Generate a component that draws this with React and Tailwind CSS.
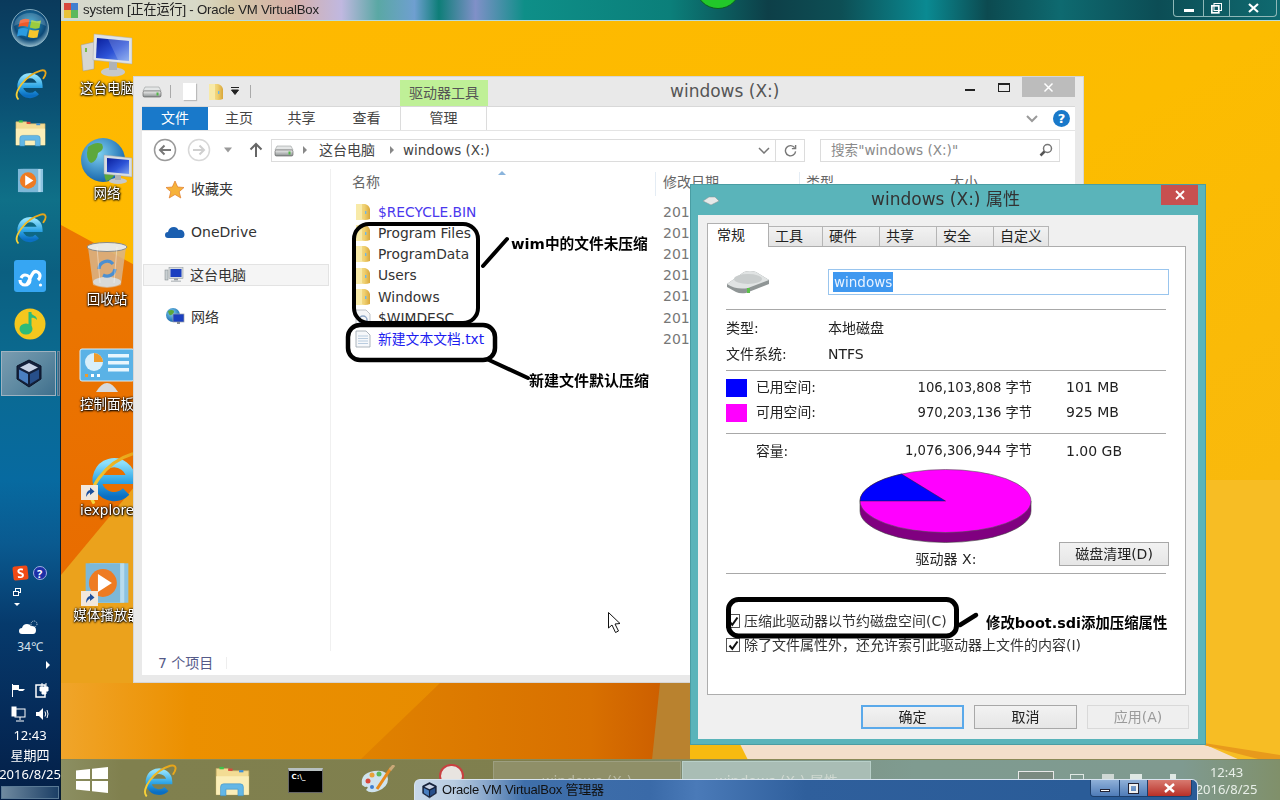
import React from "react";

const Gradients = () => (
  <svg width="0" height="0" className="absolute">
    <defs>
      <linearGradient id="ieBlue" x1="0" y1="0" x2="0" y2="1">
        <stop offset="0" stopColor="#8fe0fb" />
        <stop offset="0.55" stopColor="#2fa6e6" />
        <stop offset="1" stopColor="#0b6fc2" />
      </linearGradient>
      <linearGradient id="gold" x1="0" y1="1" x2="1" y2="0">
        <stop offset="0" stopColor="#f7d33a" />
        <stop offset="1" stopColor="#e6a217" />
      </linearGradient>
      <linearGradient id="screen" x1="0" y1="0" x2="1" y2="1">
        <stop offset="0" stopColor="#0a1f9c" />
        <stop offset="0.55" stopColor="#2c52d6" />
        <stop offset="1" stopColor="#7aa0ee" />
      </linearGradient>
      <linearGradient id="folderY" x1="0" y1="0" x2="1" y2="0">
        <stop offset="0" stopColor="#f8e9a8" />
        <stop offset="0.6" stopColor="#efd070" />
        <stop offset="1" stopColor="#d9a73a" />
      </linearGradient>
      <linearGradient id="diskG" x1="0" y1="0" x2="0" y2="1">
        <stop offset="0" stopColor="#f0f0f0" />
        <stop offset="1" stopColor="#8a8f8f" />
      </linearGradient>
      <radialGradient id="orb" cx="0.5" cy="0.4" r="0.6">
        <stop offset="0" stopColor="#2aa0cf" />
        <stop offset="0.7" stopColor="#0d4a78" />
        <stop offset="1" stopColor="#8fb7c8" />
      </radialGradient>
      <radialGradient id="globe" cx="0.4" cy="0.35" r="0.7">
        <stop offset="0" stopColor="#7fd0f0" />
        <stop offset="1" stopColor="#1160a8" />
      </radialGradient>
      <linearGradient id="wallBase" x1="0" y1="0" x2="1" y2="1">
        <stop offset="0" stopColor="#ffb800" />
        <stop offset="0.5" stopColor="#fcbc00" />
        <stop offset="1" stopColor="#f7b714" />
      </linearGradient>
      <linearGradient id="wallDark" x1="0" y1="0" x2="0" y2="1">
        <stop offset="0" stopColor="#ec7800" />
        <stop offset="1" stopColor="#e66600" />
      </linearGradient>
      <linearGradient id="wallBottom" x1="0" y1="0" x2="1" y2="0">
        <stop offset="0" stopColor="#f0a52a" />
        <stop offset="0.2" stopColor="#ec9000" />
        <stop offset="0.6" stopColor="#e78c00" />
        <stop offset="1" stopColor="#e58500" />
      </linearGradient>
      <linearGradient id="wallBurn" x1="0" y1="0" x2="1" y2="0">
        <stop offset="0" stopColor="#e08200" />
        <stop offset="0.7" stopColor="#d87000" />
        <stop offset="1" stopColor="#c85800" />
      </linearGradient>
    </defs>
  </svg>
);

const IE = ({ s = 40 }) => (
  <svg width={s} height={s} viewBox="0 0 48 48" fill="none">
    <path d="M10 26 H38 A14 14 0 1 0 34 36" stroke="url(#ieBlue)" strokeWidth="7.5" />
    <path d="M7 45 C0 37 16 12 39 5 C47 3 48 9 43 16" stroke="url(#gold)" strokeWidth="2.6" strokeLinecap="round" />
  </svg>
);

const FolderExplorer = ({ s = 34 }) => (
  <svg width={s} height={s} viewBox="0 0 34 34">
    <path d="M2 6 h11 l2 2 h17 v22 h-30 z" fill="#f3dc94" stroke="#c9ad66" strokeWidth="0.6" />
    <rect x="5" y="4.5" width="4" height="2.2" fill="#3fc24b" />
    <rect x="13" y="6" width="4" height="2.2" fill="#d9483b" />
    <rect x="23" y="7.5" width="4" height="2" fill="#3b8fd9" />
    <path d="M2 13 h30 v17 h-30 z" fill="#fbeeb8" />
    <path d="M6 31 v-8 q0-3 3-3 h15 q3 0 3 3 v8 h-5 v-6 h-11 v6 z" fill="#63b7e6" stroke="#3a8cc0" strokeWidth="0.5" />
  </svg>
);

const Media = ({ s = 28 }) => (
  <svg width={s} height={s} viewBox="0 0 28 28">
    <rect x="6" y="2" width="21" height="24" fill="#8cc3e0" />
    <rect x="3.5" y="2" width="21" height="24" fill="#b8dcee" />
    <rect x="1" y="2" width="21" height="24" fill="#7db8d8" />
    <circle cx="11.5" cy="14" r="8.5" fill="#ee7b22" />
    <path d="M8.5 8.5 L17 14 L8.5 19.5z" fill="#fff" />
  </svg>
);

const Baidu = () => (
  <svg width="32" height="32" viewBox="0 0 32 32">
    <rect width="32" height="32" rx="3" fill="#36a6f3" />
    <path d="M6 20a5 5 0 1 0 5-5c-2 0-3 1-4 3M11 25c3 0 5-8 8-12 2-3 7-1 7 3 0 2-1 3-2 4" fill="none" stroke="#fff" strokeWidth="3.2" />
    <circle cx="26.5" cy="25" r="1.6" fill="#fff" />
  </svg>
);

const QQ = () => (
  <svg width="32" height="32" viewBox="0 0 32 32">
    <circle cx="16" cy="16" r="15.5" fill="#f4c71e" />
    <path d="M16 4 V20" stroke="#2dbb78" strokeWidth="3" />
    <ellipse cx="12" cy="21" rx="6.5" ry="5.5" fill="#2dbb78" />
    <path d="M16 4 C18 8 23 7 23 12 C20 9 18 10 16 10z" fill="#2dbb78" />
  </svg>
);

const VBox = ({ s = 28 }) => (
  <svg width={s} height={s} viewBox="0 0 28 30">
    <path d="M14 1 L26 7 V20 L14 28 L2 20 V7z" fill="#14213c" stroke="#0b1428" />
    <path d="M14 4 L23 8.5 L14 13 L5 8.5z" fill="#c8d3e6" />
    <path d="M4 10.5 L13 15 V25 L4 19.5z" fill="#4a7fc0" />
    <path d="M24 10.5 L15 15 V25 L24 19.5z" fill="#274f8a" />
  </svg>
);

const StartOrb = () => (
  <svg width="38" height="38" viewBox="0 0 38 38">
    <circle cx="19" cy="19" r="18.5" fill="url(#orb)" stroke="#9cc0cf" strokeWidth="0.8" />
    <path d="M9 11.500 q4.500-3 9.500-1 l-1.600 7.500 q-5-2-9.500 0z" fill="#ef5a2a" />
    <path d="M20.500 11 q4.500 2 9.500 0.500 l-1.600 7.500 q-5 1.500-9.500-0.500z" fill="#9ccc3e" />
    <path d="M7.500 20 q4.500-2 9.500 0 l-1.600 7.500 q-5-2-9.500 0z" fill="#2b9be0" />
    <path d="M18.500 20.500 q4.500 1.500 9.500 0.500 l-1.600 7.500 q-5 1-9.500-0.500z" fill="#f7c52b" />
    <path d="M3 17 A16 13 0 0 1 35 17 Q19 9 3 17z" fill="#fff" opacity="0.18" />
  </svg>
);

const Computer = () => (
  <svg width="54" height="48" viewBox="0 0 54 48">
    <path d="M1 14 L14 11 V38 L3 40z" fill="#d6d6d2" stroke="#9a9a96" strokeWidth="0.5" />
    <rect x="5" y="17" width="2" height="4" fill="#79b94b" />
    <path d="M14 3 L52 7 V33 L13 29z" fill="#dfe3e6" stroke="#a8adb2" strokeWidth="0.5" />
    <path d="M17 7 L49 10 V30 L16 27z" fill="url(#screen)" />
    <path d="M28 8 L49 10 V30 L38 29z" fill="#fff" opacity="0.18" />
    <ellipse cx="33" cy="41" rx="12" ry="4.5" fill="#c6c9cb" />
    <rect x="29" y="31" width="8" height="8" fill="#aeb2b5" />
  </svg>
);

const NetworkIcon = () => (
  <svg width="54" height="48" viewBox="0 0 54 48">
    <circle cx="23" cy="23" r="22" fill="url(#globe)" />
    <path d="M8 10 q8-6 14-3 q3 6-4 9 q-1 8-7 10 q-6-4-3-16z M28 26 q8 0 8 8 q-2 8-10 10 q-4-8 2-18z" fill="#5da83c" />
    <path d="M24 18 L52 21 V40 L24 37z" fill="#d8dde0" stroke="#9aa0a5" strokeWidth="0.5" />
    <path d="M27 21 L49 23 V37 L27 35z" fill="url(#screen)" />
    <ellipse cx="38" cy="44" rx="9" ry="3" fill="#c6c9cb" />
    <rect x="35" y="38" width="6" height="5" fill="#aeb2b5" />
  </svg>
);

const Recycle = () => (
  <svg width="44" height="50" viewBox="0 0 44 50">
    <path d="M3 6 L8 44 Q22 50 36 44 L41 6z" fill="#d9b48a" opacity="0.85" />
    <ellipse cx="22" cy="6" rx="20" ry="4.5" fill="#e8e8e4" stroke="#8a8a86" />
    <ellipse cx="22" cy="41" rx="14" ry="5" fill="#d9d9d6" />
    <path d="M14 28 a8 8 0 0 1 14-5 M30 28 a8 8 0 0 1-12 6" fill="none" stroke="#4c8fd0" strokeWidth="3.2" />
    <path d="M12 6 L15 42 M32 6 L29 42" stroke="#fff" strokeWidth="0.8" opacity="0.5" />
  </svg>
);

const ControlPanel = () => (
  <svg width="56" height="48" viewBox="0 0 56 48">
    <rect x="1" y="1" width="54" height="32" rx="2" fill="#5ab2e6" stroke="#d8edf8" />
    <circle cx="15" cy="14" r="9" fill="#d8effa" />
    <path d="M15 14 V5 A9 9 0 0 1 24 14z" fill="#ef9b2b" />
    <rect x="29" y="6" width="21" height="3.5" fill="#e8f6fd" />
    <rect x="29" y="13" width="21" height="3.5" fill="#e8f6fd" />
    <rect x="29" y="20" width="21" height="3.5" fill="#e8f6fd" />
    <rect x="6" y="26" width="3" height="3" fill="#ef9b2b" />
    <rect x="12" y="26" width="3" height="3" fill="#fff" />
    <rect x="18" y="26" width="3" height="3" fill="#fff" />
    <path d="M17 44 Q28 26 39 44z" fill="#d8dadb" />
  </svg>
);

const ShortcutBadge = () => (
  <span className="absolute left-[20px] bottom-[1px] flex h-[15px] w-[17px] items-center justify-center bg-[#f2e8dc]">
    <svg width="11" height="11" viewBox="0 0 11 11">
      <path d="M2 10 Q2 4 6 3 V0.5 L10.5 4.5 L6 8 V5.5 Q4 6 2 10z" fill="#1d4f9c" />
    </svg>
  </span>
);

const DesktopIcon = ({ label, children }) => (
  <div className="flex h-[105.5px] w-[92px] shrink-0 flex-col items-center pt-[2px]">
    <div className="relative flex h-[48px] w-full items-center justify-center">{children}</div>
    <div className="flex h-[18px] items-center whitespace-nowrap text-[13.5px] text-white [text-shadow:0_1px_2px_#000,0_0_2px_#000,1px_0_2px_#000]">{label}</div>
  </div>
);

const DriveSmall = ({ s = 20 }) => (
  <svg width={s} height={s * 0.65} viewBox="0 0 20 13">
    <path d="M3 2 H17 L19 6 H1z" fill="#e4e6e6" stroke="#8a8f8f" strokeWidth="0.5" />
    <rect x="1" y="6" width="18" height="6" rx="1.5" fill="url(#diskG)" stroke="#555" strokeWidth="0.6" />
    <rect x="14.5" y="7.5" width="2" height="3" fill="#52b848" />
  </svg>
);

const DriveBig = () => (
  <svg width="44" height="24" viewBox="0 0 44 24">
    <path d="M1 14 L18 2 Q24 0 30 2 L43 10 V14 L20 23 Q14 24 10 22 L1 17z" fill="#8f9595" />
    <path d="M1 14 L18 2 Q24 0 30 2 L43 10 L22 18 Q10 20 1 14z" fill="#e0e3e3" />
    <ellipse cx="22" cy="9" rx="14" ry="5" fill="#c9cdcd" />
    <rect x="21" y="18" width="3" height="5" fill="#5cc04a" />
  </svg>
);

const Folder = () => (
  <svg width="16" height="18" viewBox="0 0 16 18">
    <path d="M1 1 H10 Q14 2 15 6 V16 Q10 18 5 16 L1 17z" fill="url(#folderY)" />
    <path d="M1 1 H7 V17 H1z" fill="#f8eaa8" />
    <rect x="10" y="8" width="1.4" height="3" fill="#6fb7e6" />
  </svg>
);

const TextFile = () => (
  <svg width="16" height="18" viewBox="0 0 16 18">
    <path d="M1 1 H11 L15 5 V17 H1z" fill="#f6f8fb" stroke="#9aa3ad" strokeWidth="0.8" />
    <path d="M3 6H13M3 8.5H13M3 11H13M3 13.500H13" stroke="#aac0d8" strokeWidth="0.8" />
  </svg>
);

const WimFile = () => (
  <svg width="16" height="18" viewBox="0 0 16 18">
    <path d="M1 1 H11 L15 5 V17 H1z" fill="#f4f5f7" stroke="#b0b5bb" strokeWidth="0.8" />
    <circle cx="8" cy="11" r="4" fill="none" stroke="#8fa8c8" strokeWidth="1.5" />
  </svg>
);

const Star = () => (
  <svg width="20" height="19" viewBox="0 0 20 19">
    <path d="M10 1 L12.700 7 L19 7.500 L14.200 11.700 L15.800 18 L10 14.500 L4.200 18 L5.800 11.700 L1 7.500 L7.300 7z" fill="#f6b23a" stroke="#e07a2a" strokeWidth="0.7" />
  </svg>
);

const Cloud = () => (
  <svg width="20" height="12" viewBox="0 0 20 12">
    <path d="M3 12 a3 3 0 0 1 0-6 q1-5 6-5 q3 0 4.500 3 q5-1 6 4 q0 4-3 4z" fill="#1b5fb0" />
  </svg>
);

const SmallPC = () => (
  <svg width="20" height="16" viewBox="0 0 20 16">
    <rect x="1" y="3" width="3" height="10" fill="#c9cfd2" stroke="#7b8488" strokeWidth="0.5" />
    <rect x="5" y="0.5" width="14" height="11" fill="#d8dde0" stroke="#8a9296" strokeWidth="0.5" />
    <rect x="6.500" y="2" width="11" height="8" fill="#1b3fc0" />
    <rect x="10" y="11.500" width="4" height="2" fill="#9aa0a5" />
    <rect x="7" y="13.500" width="10" height="1.500" fill="#c0c4c7" />
  </svg>
);

const SmallNet = () => (
  <svg width="20" height="18" viewBox="0 0 20 18">
    <circle cx="8" cy="7" r="7" fill="url(#globe)" />
    <path d="M3 3 q4-2 6 0 q0 3-3 4 q-2 1-3-4z" fill="#5da83c" />
    <rect x="8" y="6" width="11" height="8" fill="#1b3fc0" stroke="#9aa0a5" strokeWidth="0.7" />
    <rect x="12" y="14" width="3" height="2" fill="#8a8f92" />
  </svg>
);

const NavItem = ({ icon, label, active, className = "" }) => (
  <div className={`flex h-[22px] items-center ${active ? "mx-[1px] border border-[#e3e3e3] bg-[#f5f5f5]" : "mx-[2px] border border-transparent"} ${className}`}>
    <span className="flex w-[46px] shrink-0 items-center justify-end pr-[6px]">{icon}</span>
    <span className="whitespace-nowrap text-[14px] text-[#333]">{label}</span>
  </div>
);

const FileRow = ({ icon, name, date, colorClass = "text-[#333]" }) => (
  <div className="flex h-[21.2px] items-center">
    <span className="flex w-[22px] shrink-0 justify-center">{icon}</span>
    <span className={`w-[289px] shrink-0 whitespace-nowrap pl-[4px] text-[13.8px] ${colorClass}`}>{name}</span>
    <span className="w-[27px] overflow-hidden whitespace-nowrap text-[14px] text-[#777]">{date}</span>
  </div>
);

const Divider = ({ className = "" }) => <div className={`h-px w-[440px] shrink-0 bg-[#a8a8a8] ${className}`} />;

const SizeRow = ({ label, bytes, human, swatch, className = "" }) => (
  <div className={`flex items-center text-[#222] ${className}`}>
    <span className={`mr-[9px] h-[18px] w-[21px] shrink-0 ${swatch || ""}`} />
    <span className="w-[100px] whitespace-nowrap text-[13.8px]">{label}</span>
    <span className="w-[176px] whitespace-nowrap text-right text-[13.2px]">{bytes}</span>
    <span className="ml-[34px] whitespace-nowrap text-[14px]">{human}</span>
  </div>
);

const Check = () => (
  <span className="flex h-[14px] w-[14px] shrink-0 items-center justify-center border border-[#555] bg-white">
    <svg width="11" height="11" viewBox="0 0 11 11"><path d="M1.500 5.500 L4.300 8.800 L9.500 1.500" fill="none" stroke="#111" strokeWidth="2" /></svg>
  </span>
);

const DlgTab = ({ label, w, active }) =>
  active ? (
    <div className={`${w} relative z-10 -mb-px flex h-[24px] items-start border border-b-0 border-[#b0b0b0] bg-white pl-[9px] pt-[1px] text-[14px] text-[#222]`}>{label}</div>
  ) : (
    <div className={`${w} -ml-px mt-[3px] flex h-[20px] items-center border border-b-0 border-[#b5b5b5] bg-[linear-gradient(#f2f2f2,#e4e4e4)] pl-[6px] text-[14px] text-[#222]`}>{label}</div>
  );

const DlgButton = ({ label, w = "w-[103px]", variant }) => (
  <div
    className={`flex h-[24px] ${w} items-center justify-center text-[14px] ${
      variant === "primary"
        ? "border-2 border-[#5aa9ea] bg-[linear-gradient(#f2f2f2,#e6e6e6)] text-[#222]"
        : variant === "disabled"
        ? "border border-[#d9d9d9] bg-[#efefef] text-[#9a9a9a]"
        : "border border-[#a8a8a8] bg-[linear-gradient(#f2f2f2,#e6e6e6)] text-[#222]"
    }`}
  >
    {label}
  </div>
);

const Tab = ({ label, w }) => <div className={`flex h-full ${w} items-center justify-center text-[14px] text-[#444]`}>{label}</div>;

const Explorer = () => (
  <div className="absolute left-[133px] top-[76px] flex h-[607px] w-[951px] flex-col border border-[#d6d6d6] bg-[#e9e9e9]">
    <div className="relative flex h-[29px] shrink-0 items-center pl-[8px]">
      <DriveSmall />
      <span className="ml-[8px] h-[13px] w-px bg-[#aaa]" />
      <span className="ml-[12px] h-[17px] w-[13px] bg-white shadow-[1px_1px_1px_#bbb]" />
      <span className="ml-[12px]"><Folder /></span>
      <svg className="ml-[6px]" width="10" height="9" viewBox="0 0 10 9"><path d="M1 0.500H9M1.500 3 L5 7.500 L8.500 3z" stroke="#222" fill="#222" /></svg>
      <span className="ml-[10px] h-[13px] w-px bg-[#aaa]" />
      <div className="absolute left-[266px] top-[3px] flex h-[26px] w-[88px] items-center justify-center whitespace-nowrap bg-[#bff097] text-[14px] text-[#555]">驱动器工具</div>
      <div className="absolute left-[536px] top-0 whitespace-nowrap text-[17px] leading-[29px] text-[#555]">windows (X:)</div>
      <div className="ml-auto flex h-full items-start">
        <span className="mr-[23px] mt-[12px] h-[2px] w-[10px] bg-[#222]" />
        <span className="mr-[12px] mt-[6px] h-[9px] w-[12px] border border-t-[2px] border-[#222]" />
        <div className="mr-[8px] flex h-[20px] w-[53px] items-center justify-center bg-[#bcbcbc]">
          <svg width="11" height="11" viewBox="0 0 11 11"><path d="M1.500 1.500 L9.500 9.500 M9.500 1.500 L1.500 9.500" stroke="#fff" strokeWidth="1.500" /></svg>
        </div>
      </div>
    </div>
    <div className="mx-[8px] mb-[7px] flex min-h-0 flex-1 flex-col border-t border-[#d8d8d8] bg-white">
      <div className="flex h-[24px] shrink-0 items-center border-b border-[#e4e4e4]">
        <div className="flex h-full w-[66px] items-center justify-center bg-[#1979ca] text-[14px] text-white">文件</div>
        <Tab label="主页" w="w-[62px]" />
        <Tab label="共享" w="w-[63px]" />
        <Tab label="查看" w="w-[67px]" />
        <div className="flex h-full w-[87px] items-center justify-center border-x border-[#dcdcdc] text-[14px] text-[#444]">管理</div>
        <svg className="ml-auto mr-[14px]" width="14" height="8" viewBox="0 0 14 8"><path d="M2 1 L7 6 L12 1" stroke="#9a9a9a" strokeWidth="2" fill="none" /></svg>
        <span className="mr-[5px] flex h-[17px] w-[17px] items-center justify-center rounded-full bg-[#1979ca] text-[13px] font-bold text-white">?</span>
      </div>
      <div className="flex h-[38px] shrink-0 items-center pl-[11px]">
        <svg width="24" height="24" viewBox="0 0 24 24" fill="none"><circle cx="12" cy="12" r="10.500" stroke="#9a9a9a" strokeWidth="1.500" /><path d="M18 12H7M11.500 7.500 L7 12 L11.500 16.500" stroke="#777" strokeWidth="2" /></svg>
        <svg className="ml-[10px]" width="24" height="24" viewBox="0 0 24 24" fill="none"><circle cx="12" cy="12" r="10.500" stroke="#d8d8d8" strokeWidth="1.500" /><path d="M6 12H17M12.500 7.500 L17 12 L12.500 16.500" stroke="#cfcfcf" strokeWidth="2" /></svg>
        <svg className="ml-[12px]" width="10" height="6" viewBox="0 0 10 6"><path d="M1 0.500H9L5 5.500z" fill="#9a9a9a" /></svg>
        <svg className="ml-[16px]" width="14" height="16" viewBox="0 0 14 16" fill="none"><path d="M7 15V2M1.500 7.500 L7 2 L12.500 7.500" stroke="#666" strokeWidth="2" /></svg>
        <div className="ml-[8px] flex h-[23px] w-[505px] items-center border border-[#dcdcdc] pl-[2px]">
          <DriveSmall />
          <span className="ml-[9px] h-0 w-0 border-y-[4px] border-l-[4px] border-y-transparent border-l-[#888]" />
          <span className="ml-[12px] whitespace-nowrap text-[14px] text-[#444]">这台电脑</span>
          <span className="ml-[15px] h-0 w-0 border-y-[4px] border-l-[4px] border-y-transparent border-l-[#888]" />
          <span className="ml-[9px] whitespace-nowrap text-[13.5px] text-[#444]">windows (X:)</span>
          <svg className="ml-auto mr-[5px]" width="12" height="7" viewBox="0 0 12 7"><path d="M1 1 L6 6 L11 1" stroke="#777" strokeWidth="1.500" fill="none" /></svg>
        </div>
        <div className="flex h-[23px] w-[29px] items-center justify-center border border-l-0 border-[#dcdcdc]">
          <svg width="13" height="13" viewBox="0 0 14 14" fill="none"><path d="M11.500 4 A5.500 5.500 0 1 0 12.500 8" stroke="#777" strokeWidth="1.500" /><path d="M12.500 1 V5 H8.500" stroke="#777" strokeWidth="1.500" /></svg>
        </div>
        <div className="ml-[15px] flex h-[23px] w-[240px] items-center border border-[#dcdcdc] pl-[10px]">
          <span className="whitespace-nowrap text-[13.6px] text-[#8a8a8a]">搜索"windows (X:)"</span>
          <svg className="ml-auto mr-[6px]" width="14" height="14" viewBox="0 0 14 14" fill="none"><circle cx="8.500" cy="5.500" r="4" stroke="#777" strokeWidth="1.500" /><path d="M5.500 8.500 L1.500 12.500" stroke="#555" strokeWidth="2.500" /></svg>
        </div>
      </div>
      <div className="flex min-h-0 flex-1">
        <div className="flex w-[189px] shrink-0 flex-col border-r border-[#f0f0f0] pb-[1px] pt-[9px]">
          <NavItem icon={<Star />} label="收藏夹" />
          <NavItem icon={<Cloud />} label="OneDrive" className="mt-[21px]" />
          <NavItem icon={<SmallPC />} label="这台电脑" active className="mt-[21px]" />
          <NavItem icon={<SmallNet />} label="网络" className="mt-[20px]" />
        </div>
        <div className="flex min-w-0 flex-1 flex-col pl-[21px]">
          <div className="relative flex h-[27px] shrink-0 items-center whitespace-nowrap">
            <span className="w-[311px] text-[14px] text-[#666]">名称</span>
            <span className="absolute left-[146px] top-[2px] h-0 w-0 border-x-[4px] border-b-[4px] border-x-transparent border-b-[#8ab4dc]" />
            <span className="absolute left-[303px] top-[3px] h-[24px] w-px bg-[#e4ecf4]" />
            <span className="w-[143px] text-[14px] text-[#666]">修改日期</span>
            <span className="absolute left-[447px] top-[3px] h-[24px] w-px bg-[#e4ecf4]" />
            <span className="w-[144px] text-[14px] text-[#666]">类型</span>
            <span className="text-[14px] text-[#666]">大小</span>
          </div>
          <div className="flex flex-col pt-[5.5px]">
            <FileRow icon={<Folder />} name="$RECYCLE.BIN" date="2014/3/18 19:26" colorClass="text-[#4a38ee]" />
            <FileRow icon={<Folder />} name="Program Files" date="2014/3/18 19:26" />
            <FileRow icon={<Folder />} name="ProgramData" date="2014/3/18 19:26" />
            <FileRow icon={<Folder />} name="Users" date="2014/3/18 19:26" />
            <FileRow icon={<Folder />} name="Windows" date="2014/3/18 19:26" />
            <FileRow icon={<WimFile />} name="$WIMDESC" date="2014/3/18 19:26" />
            <FileRow icon={<TextFile />} name="新建文本文档.txt" date="2016/8/25 12:40" colorClass="text-[#1c1cf0]" />
          </div>
        </div>
      </div>
      <div className="flex h-[24px] shrink-0 items-center pl-[16px]">
        <span className="whitespace-nowrap text-[14px] text-[#555a88]">7 个项目</span>
        <span className="ml-[13px] h-[12px] w-px bg-[#eee]" />
      </div>
    </div>
  </div>
);

const Properties = () => (
  <div className="absolute left-[690px] top-[184px] flex h-[561px] w-[516px] flex-col border border-[#4a9da3] bg-[#5ab4ba]">
    <div className="relative flex h-[30px] shrink-0 items-center justify-center">
      <svg className="absolute left-[11px] top-[11px]" width="18" height="10" viewBox="0 0 18 10">
        <path d="M1 5 L7 1 H13 L17 5 L9 9z" fill="#e6e9e9" stroke="#8a9090" strokeWidth="0.500" />
      </svg>
      <span className="pr-[5px] text-[17px] text-[#333]">windows (X:) 属性</span>
      <div className="absolute right-[7px] top-0 flex h-[20px] w-[37px] items-center justify-center bg-[#c75050]">
        <svg width="10" height="10" viewBox="0 0 10 10"><path d="M1 1 L9 9 M9 1 L1 9" stroke="#fff" strokeWidth="1.800" /></svg>
      </div>
    </div>
    <div className="mx-[7px] flex h-[524px] flex-col bg-[#f0f0f0] pl-[9px] pt-[8px]">
      <div className="flex h-[23px] shrink-0 items-start">
        <DlgTab label="常规" w="w-[62px]" active />
        <DlgTab label="工具" w="w-[55px]" />
        <DlgTab label="硬件" w="w-[58px]" />
        <DlgTab label="共享" w="w-[58px]" />
        <DlgTab label="安全" w="w-[58px]" />
        <DlgTab label="自定义" w="w-[56px]" />
      </div>
      <div className="flex h-[449px] w-[479px] shrink-0 flex-col border border-[#adadad] bg-white pl-[18px] pt-[22px]">
        <div className="flex h-[26px] shrink-0 items-center">
          <DriveBig />
          <div className="ml-[58px] flex h-[26px] w-[341px] items-center border border-[#99c5ee] pl-[4px]">
            <span className="bg-[#3f98f0] px-px text-[13.5px] leading-[20px] text-[#e8f2ff]">windows</span>
          </div>
        </div>
        <Divider className="mt-[14px]" />
        <div className="mt-[5px] flex h-[26px] items-center text-[14px] text-[#222]"><span className="w-[102px]">类型:</span>本地磁盘</div>
        <div className="flex h-[26px] items-center text-[14px] text-[#222]"><span className="w-[102px]">文件系统:</span>NTFS</div>
        <Divider className="mt-[3px]" />
        <SizeRow className="mt-[4px] h-[25px]" swatch="bg-[#0000ff]" label="已用空间:" bytes="106,103,808 字节" human="101 MB" />
        <SizeRow className="h-[25px]" swatch="bg-[#ff00ff]" label="可用空间:" bytes="970,203,136 字节" human="925 MB" />
        <Divider className="mt-[8px]" />
        <SizeRow className="mt-[7px] h-[20px]" label="容量:" bytes="1,076,306,944 字节" human="1.00 GB" />
        <div className="mt-[4px] grid h-[104px] w-[440px] shrink-0">
          <div className="col-start-1 row-start-1 flex flex-col items-center">
            <svg width="174" height="80" viewBox="0 0 174 80">
              <path d="M1 36 V46 A85.500 31.500 0 0 0 172 46 V36z" fill="#800080" stroke="#404040" strokeWidth="0.600" />
              <ellipse cx="86.500" cy="36" rx="85.500" ry="31.500" fill="#ff00ff" stroke="#555" strokeWidth="0.600" />
              <path d="M86.500 36 H1 A85.500 31.500 0 0 1 42.500 9z" fill="#0000ff" stroke="#222" strokeWidth="0.500" />
            </svg>
            <span className="mt-[4px] flex h-[20px] items-center text-[14px] text-[#222]">驱动器 X:</span>
          </div>
          <div className="col-start-1 row-start-1 -mr-[3px] mb-[3px] flex self-end justify-self-end">
            <div className="flex h-[24px] w-[110px] items-center justify-center border border-[#a8a8a8] bg-[linear-gradient(#f2f2f2,#e6e6e6)] text-[14px] text-[#222]">磁盘清理(D)</div>
          </div>
        </div>
        <Divider className="mt-[4px]" />
        <div className="mt-[35px] flex h-[24px] items-center gap-[4px] whitespace-nowrap text-[14px] text-[#333]"><Check />压缩此驱动器以节约磁盘空间(C)</div>
        <div className="flex h-[24px] items-center gap-[4px] whitespace-nowrap text-[14px] text-[#333]"><Check />除了文件属性外，还允许索引此驱动器上文件的内容(I)</div>
      </div>
      <div className="ml-[154px] mt-[10px] flex gap-[10px]">
        <DlgButton label="确定" variant="primary" />
        <DlgButton label="取消" />
        <DlgButton label="应用(A)" w="w-[102px]" variant="disabled" />
      </div>
    </div>
  </div>
);

const Annotations = () => (
  <>
    <svg className="pointer-events-none absolute left-0 top-0" width="1280" height="800" fill="none" stroke="#000" strokeLinecap="round">
      <rect x="354" y="224" width="124" height="99" rx="15" strokeWidth="4" />
      <rect x="348" y="325" width="147" height="35" rx="12" strokeWidth="4.500" />
      <path d="M483 266 L507 239" strokeWidth="4" />
      <path d="M489 360 L528 378" strokeWidth="4" />
      <rect x="728.500" y="599.500" width="228" height="36.500" rx="10" strokeWidth="5" />
      <path d="M960 625 L976 615" strokeWidth="4.500" />
      <path d="M608.500 612.500 V628 L612 625 L615.500 632.500 L618.500 631 L615 624 L620 623.500z" fill="#fff" strokeWidth="1" strokeLinecap="butt" stroke="#111" />
    </svg>
    <div className="absolute left-[511px] top-[235px] whitespace-nowrap text-[14.7px] font-bold leading-[18px] text-black">wim中的文件未压缩</div>
    <div className="absolute left-[529px] top-[372px] whitespace-nowrap text-[15px] font-bold leading-[18px] text-black">新建文件默认压缩</div>
    <div className="absolute left-[986px] top-[614px] whitespace-nowrap text-[14.4px] font-bold leading-[18px] text-black">修改boot.sdi添加压缩属性</div>
  </>
);

const Wallpaper = () => (
  <svg className="absolute left-0 top-0" width="1219" height="738" viewBox="61 21 1219 738" preserveAspectRatio="none">
    <rect x="61" y="21" width="1219" height="738" fill="url(#wallBase)" />
    <path d="M61 225 L420 420 L700 560 V760 H61z" fill="url(#wallDark)" />
    <path d="M61 575 L140 480 V700 H61z" fill="#eba21c" />
    <path d="M61 683 H700 V760 H61z" fill="url(#wallBottom)" />
    <path d="M360 760 L440 683 L690 683 V760z" fill="url(#wallBurn)" />
    <path d="M660 683 H700 V760 H652z" fill="#b9822f" />
    <path d="M690 600 H1240 V760 H690z" fill="#f7ba10" />
    <path d="M738 740 H1185 L1262 760 H748z" fill="#f3dfcb" />
    <path d="M1206 480 H1280 V760 H1240 L1206 745z" fill="#f7bd24" />
    <path d="M1185 740 L1262 760 H1280 V755z" fill="#e89a1c" />
  </svg>
);

const SideSlot = ({ children, className = "" }) => (
  <div className={`flex h-[48px] shrink-0 items-center justify-center ${className}`}>{children}</div>
);

const Sidebar = () => (
  <div className="flex h-full w-[61px] shrink-0 flex-col border-r border-[#071c30] bg-[linear-gradient(180deg,#0a3a5c_0%,#0a4f72_12%,#0f7088_25%,#0b5f80_34%,#0b6a90_45%,#076aa0_60%,#0a5a90_68%,#063a6c_78%,#052a58_90%,#031f46_100%)]">
    <div className="flex h-[56px] shrink-0 items-center justify-center"><StartOrb /></div>
    <div className="h-[4px] shrink-0" />
    <SideSlot><IE s={34} /></SideSlot>
    <SideSlot><FolderExplorer s={33} /></SideSlot>
    <SideSlot><Media s={27} /></SideSlot>
    <SideSlot><IE s={34} /></SideSlot>
    <SideSlot><Baidu /></SideSlot>
    <SideSlot><QQ /></SideSlot>
    <div className="mt-[3px] flex h-[45px] shrink-0 pl-px">
      <div className="flex w-[55px] items-center justify-center border border-[#9fb2c0] bg-[linear-gradient(135deg,#7a9cb0,#5f8aa2_50%,#3f6f8c)]"><VBox s={30} /></div>
      <div className="ml-[1px] w-[3px] border border-[#6f8ba0] bg-[#3f6480]" />
    </div>
    <div className="mt-auto flex flex-col text-white [font-family:'Noto_Sans','Noto_Sans_CJK_SC',sans-serif]">
      <div className="flex h-[20px] items-center justify-center gap-[5px] pr-[1px]">
        <span className="flex h-[14px] w-[15px] -rotate-6 items-center justify-center rounded-[2px] bg-[#f04a16] text-[13px] font-bold leading-none text-white">S</span>
        <span className="flex h-[14px] w-[14px] items-center justify-center rounded-full border border-[#a0b0e0] bg-[#1c2fa8] text-[11px] font-bold leading-none text-white">?</span>
      </div>
      <div className="flex h-[17px] items-center pl-[13px]">
        <svg width="8" height="8" viewBox="0 0 8 8" fill="none" stroke="#fff"><rect x="2.500" y="0.500" width="5" height="4" /><rect x="0.500" y="3.500" width="5" height="4" fill="#0a3a6c" /></svg>
      </div>
      <div className="flex h-[8px] items-center pl-[14px]"><span className="h-0 w-0 border-x-[3px] border-t-[3px] border-x-transparent border-t-white" /></div>
      <div className="flex h-[32px] items-center justify-center pt-[6px]">
        <svg width="22" height="16" viewBox="0 0 22 16">
          <circle cx="15" cy="5" r="3" fill="none" stroke="#fff" strokeWidth="0.800" strokeDasharray="1 1" />
          <path d="M3 15 a3 3 0 0 1 0-6 q1-4 5-4 q3 0 4 2 q5 0 5 4 q0 4-3 4z" fill="#fff" />
        </svg>
      </div>
      <div className="flex h-[14px] items-center justify-center text-[12px] leading-none text-[#d8e4ee]">34℃</div>
      <div className="flex h-[22px] items-center justify-end pr-[10px]"><span className="h-0 w-0 border-y-[4px] border-l-[4px] border-y-transparent border-l-white" /></div>
      <div className="mt-[2px] flex h-[24px] items-center justify-center gap-[9px]">
        <svg width="15" height="15" viewBox="0 0 15 15"><path d="M1.500 1 V14" stroke="#fff" /><path d="M2 2 H8 V6 H14 L12 8 H8 L7 7 H2z" fill="#fff" /></svg>
        <svg width="14" height="16" viewBox="0 0 14 16" fill="none" stroke="#fff"><rect x="1" y="3" width="9" height="12" strokeWidth="1.500" /><path d="M5 5 H13 V9 H11 V12 H7 V9 H5z M7 1 V5 M11 1 V5" fill="#fff" strokeWidth="1" /></svg>
      </div>
      <div className="flex h-[24px] items-center justify-center gap-[9px]">
        <svg width="15" height="16" viewBox="0 0 15 16" fill="none" stroke="#fff"><rect x="4" y="3" width="10" height="8" /><path d="M9 11V14M5 15H13" /><rect x="1" y="1" width="4" height="9" fill="#fff" /></svg>
        <svg width="15" height="14" viewBox="0 0 15 14" fill="none"><path d="M1 5H4L8 1V13L4 9H1z" fill="#fff" /><path d="M10 4.500Q11.500 7 10 9.500M12 3Q14 7 12 11" stroke="#fff" /></svg>
      </div>
      <div className="flex h-[20px] items-center justify-center text-[13px]">12:43</div>
      <div className="flex h-[20px] items-center justify-center text-[13px]">星期四</div>
      <div className="flex h-[18px] items-center justify-center whitespace-nowrap text-[13px]">2016/8/25</div>
      <div className="mx-px mb-px mt-[2px] h-[13px] border border-[#5a7a95] bg-[linear-gradient(90deg,#6f8aa0,#1c3f66)]" />
    </div>
  </div>
);

const TopBar = () => (
  <div className="relative flex h-[21px] shrink-0 items-center overflow-hidden border-b border-[#b8dcdc] bg-[linear-gradient(90deg,#d6d9ce_0%,#d8dac8_11%,#d4c8a8_14%,#d6b0a8_19%,#c0b8e0_23%,#5aa8a4_26%,#6f9fd0_29%,#0e7e78_31%,#8090c8_34%,#0e8f88_38%,#0b7f7a_50%,#0d3f48_58%,#0d4f55_64%,#0a8a92_71%,#0c4a50_76%,#0e6a70_82%,#0c4d55_90%,#0f6a70_100%)] pl-[2px] shadow-[0_1px_0_#1a3030]">
    <svg width="16" height="17" viewBox="0 0 16 17">
      <rect x="1" y="1" width="14" height="15" fill="#e8e4d8" />
      <rect x="1" y="1" width="7" height="7" fill="#d9483b" />
      <rect x="8" y="1" width="7" height="7" fill="#3f7fd0" />
      <rect x="1" y="8" width="7" height="8" fill="#e8c23a" />
      <rect x="8" y="8" width="7" height="8" fill="#5cb85c" />
    </svg>
    <span className="ml-[4px] whitespace-nowrap text-[13.2px] tracking-[-0.2px] text-[#222] [font-family:'Liberation_Sans','Noto_Sans_CJK_SC',sans-serif]">system [正在运行] - Oracle VM VirtualBox</span>
    <span className="absolute left-[634px] top-[-37px] h-[46px] w-[46px] rounded-full border border-[#0b5c20] bg-[#22c72a]" />
    <div className="absolute right-[3px] top-0 flex h-[17px] w-[104px] items-start rounded-b-[4px] border border-t-0 border-[#8fb8b8]">
      <div className="flex h-full w-[30px] items-center justify-center border-r border-[#8fb8b8] pt-[4px]"><span className="h-[3px] w-[10px] bg-white" /></div>
      <div className="flex h-full w-[26px] items-center justify-center border-r border-[#8fb8b8]">
        <svg width="11" height="11" viewBox="0 0 11 11" fill="none" stroke="#fff"><rect x="3" y="0.500" width="7.500" height="7" /><rect x="0.800" y="2.800" width="7" height="7" strokeWidth="1.700" /></svg>
      </div>
      <div className="flex h-full flex-1 items-center justify-center">
        <svg width="11" height="10" viewBox="0 0 11 10"><path d="M1 1 L10 9 M10 1 L1 9" stroke="#fff" strokeWidth="2.200" /></svg>
      </div>
    </div>
  </div>
);

const TaskIcon = ({ children, w }) => <div className={`flex h-full ${w} shrink-0 items-center justify-center`}>{children}</div>;

const Taskbar = () => (
  <div className="relative flex h-[41px] shrink-0 items-start overflow-hidden border-t border-[#8a8a58] bg-[linear-gradient(90deg,#8c8f62_0%,#80804e_5%,#7f7f4e_42%,#7d9080_56%,#7f9b90_70%,#7f9a90_92%,#80906a_100%)]">
    <TaskIcon w="w-[62px]">
      <svg width="32" height="26" viewBox="0 0 32 26" fill="#fff">
        <path d="M0 3.500 L14 2 V12 H0z" /><path d="M16 1.800 L32 0 V12 H16z" /><path d="M0 14 H14 V24 L0 22.500z" /><path d="M16 14 H32 V26 L16 24.200z" />
      </svg>
    </TaskIcon>
    <TaskIcon w="w-[72px]"><IE s={36} /></TaskIcon>
    <TaskIcon w="w-[74px]"><FolderExplorer s={37} /></TaskIcon>
    <TaskIcon w="w-[72px]">
      <div className="h-[25px] w-[35px] border border-[#666] border-t-[3px] border-t-[#b8c0c0] bg-black pl-[3px] pt-[2px] text-[7px] font-bold leading-[8px] text-white">C:\_</div>
    </TaskIcon>
    <TaskIcon w="w-[74px]">
      <svg width="36" height="30" viewBox="0 0 36 30">
        <path d="M2 20 Q0 8 14 6 Q28 4 28 14 Q28 22 18 26 Q10 29 6 25 Q10 21 5 22z" fill="#cfe3ee" />
        <circle cx="8" cy="16" r="2.500" fill="#d9483b" /><circle cx="12" cy="10" r="2.500" fill="#e8a23a" /><circle cx="19" cy="9" r="2.500" fill="#5cb85c" /><circle cx="12" cy="22" r="2" fill="#3f7fd0" />
        <path d="M17 24 L31 3" stroke="#e88a1c" strokeWidth="3" /><path d="M30 5 L34 0" stroke="#c9a878" strokeWidth="3" />
      </svg>
    </TaskIcon>
    <div className="flex h-full w-[72px] shrink-0 items-start justify-center pt-[4px]">
      <span className="block h-[24px] w-[25px] rounded-full border-2 border-[#c94040] bg-[#e8e4e0]" />
    </div>
    <div className="ml-[6px] mt-[1px] flex h-[39px] w-[188px] shrink-0 items-start justify-center border border-[#9d9f80] bg-[#8f8f68] pt-[9px] text-[14px] text-[#b8b8a0]">windows (X:)</div>
    <div className="ml-px mt-[1px] flex h-[39px] w-[189px] shrink-0 items-start justify-center border border-[#b8cfc8] bg-[#a9bdb5] pt-[9px] text-[14px] text-[#cfd8d0]">windows (X:) 属性</div>
    <div className="ml-[147px] mt-[11px] h-[8px] w-[36px] border border-[#e8e8e8] border-b-0 bg-[#7a8a80]" />
    <div className="ml-[16px] mt-[14px] h-[6px] w-[14px] border border-[#dfe8e4] border-b-0" />
    <div className="ml-[18px] mt-[14px] h-[6px] w-[12px] bg-[#cfd8d4]" />
    <div className="ml-[16px] mt-[14px] h-[6px] w-[12px] bg-[#dfe8e4]" />
    <div className="ml-[28px] mt-[14px] h-[6px] w-[6px] bg-[#dfe8e4]" />
    <div className="ml-auto mr-[12px] flex h-full w-[83px] shrink-0 flex-col items-center text-[13px] leading-[18px] text-[#e8efe8] [font-family:'Noto_Sans',sans-serif]">
      <span className="mt-[3px]">12:43</span>
      <span className="mt-[-1px] whitespace-nowrap">2016/8/25</span>
    </div>
  </div>
);

const VBoxBar = () => (
  <div className="absolute bottom-0 left-[414px] flex h-[21px] w-[784px] items-center rounded-t-[6px] border border-b-0 border-[#d8e4f0] bg-[linear-gradient(90deg,#c8d8ea_0%,#b8cce0_5%,#8aa8cc_9%,#3f6faa_14%,#3a6aa8_30%,#4a7ab8_36%,#2f5f9c_50%,#2a5c98_85%,#2a5c98_100%)] pl-[6px]">
    <VBox s={17} />
    <span className="ml-[4px] whitespace-nowrap text-[13px] tracking-[-0.2px] text-[#111] [font-family:'Liberation_Sans','Noto_Sans_CJK_SC',sans-serif]">Oracle VM VirtualBox 管理器</span>
    <div className="ml-auto mr-[5px] flex h-[17px] w-[102px] self-start overflow-hidden rounded-b-[4px] border border-t-0 border-[#1d3f6c]">
      <div className="flex w-[28px] items-center justify-center bg-[linear-gradient(#8fb0d8,#4f7cb8)] pt-[4px]"><span className="h-[3px] w-[10px] border border-[#223] bg-white" /></div>
      <div className="flex w-[28px] items-center justify-center border-l border-[#1d3f6c] bg-[linear-gradient(#8fb0d8,#4f7cb8)]"><span className="h-[9px] w-[9px] border-2 border-[#f0f0f0] outline outline-1 outline-[#223]" /></div>
      <div className="flex flex-1 items-center justify-center border-l border-[#1d3f6c] bg-[linear-gradient(#d87a70,#b83028)]">
        <svg width="11" height="10" viewBox="0 0 11 10"><path d="M1 1 L10 9 M10 1 L1 9" stroke="#fff" strokeWidth="2.400" /></svg>
      </div>
    </div>
  </div>
);

export default function App() {
  return (
    <div className="relative flex h-[800px] w-[1280px] overflow-hidden blur-[0.35px] [font-family:'DejaVu_Sans','Noto_Sans_CJK_SC',sans-serif]">
      <Gradients />
      <Sidebar />
      <div className="flex min-w-0 flex-1 flex-col">
        <TopBar />
        <div className="relative min-h-0 flex-1 overflow-hidden">
          <Wallpaper />
          <div className="relative flex flex-col pt-[8px]">
            <DesktopIcon label="这台电脑"><Computer /></DesktopIcon>
            <DesktopIcon label="网络"><NetworkIcon /></DesktopIcon>
            <DesktopIcon label="回收站"><Recycle /></DesktopIcon>
            <DesktopIcon label="控制面板"><ControlPanel /></DesktopIcon>
            <DesktopIcon label="iexplore"><div className="ml-[14px]"><IE s={58} /></div><ShortcutBadge /></DesktopIcon>
            <DesktopIcon label="媒体播放器"><Media s={46} /><ShortcutBadge /></DesktopIcon>
          </div>
        </div>
        <Taskbar />
      </div>
      <Explorer />
      <Properties />
      <Annotations />
      <VBoxBar />
    </div>
  );
}
